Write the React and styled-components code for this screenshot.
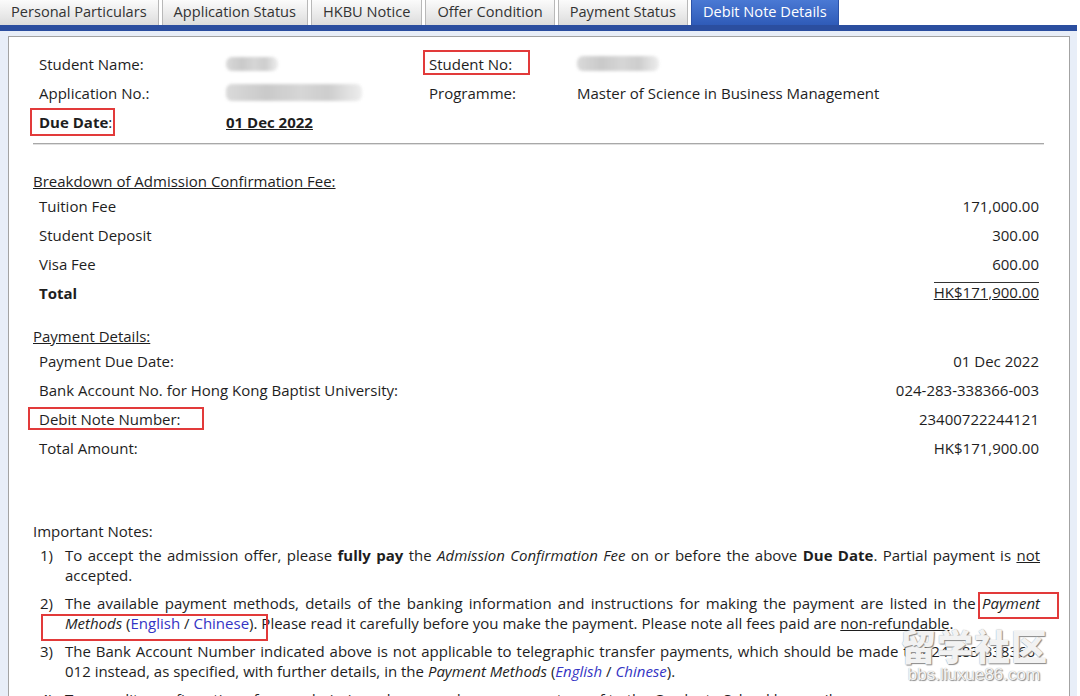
import React from "react";
import styled, { createGlobalStyle } from "styled-components";

const Global = createGlobalStyle`
  html, body { margin: 0; padding: 0; background: #fff; }
  body {
    font-family: "Open Sans", "Noto Sans", "Liberation Sans", sans-serif;
    font-size: 15px;
    color: #1e1e1e;
    overflow: hidden;
  }
`;

const Page = styled.div`
  position: relative;
  width: 1077px;
  height: 696px;
  overflow: hidden;
`;

const TabBar = styled.div`
  display: flex;
  align-items: flex-end;
  gap: 3px;
  height: 25px;
`;

const Tab = styled.div`
  height: 25px;
  box-sizing: border-box;
  padding: 0 11px 3px;
  display: flex;
  align-items: center;
  font-size: 14.6px;
  white-space: nowrap;
  border: 1px solid ${(p) => (p.$active ? "#2c52a8" : "#b8b8b8")};
  border-top: none;
  border-bottom: none;
  color: ${(p) => (p.$active ? "#fff" : "#333")};
  background: ${(p) =>
    p.$active
      ? "linear-gradient(#4a79d4, #2f5bb8)"
      : "linear-gradient(#fbfbfb, #e9e9e9 60%, #dcdcdc)"};
  margin-left: ${(p) => (p.$first ? "-1px" : "0")};
`;

const BlueBar = styled.div`
  height: 6px;
  background: #2b4e9f;
`;

const Frame = styled.div`
  background: #e8eef8;
  padding: 5px 7px 0 8px;
`;

const Panel = styled.div`
  background: #fff;
  border: 1px solid #a3a3a3;
  border-bottom: none;
  padding: 12px 25px 0 24px;
  height: 680px;
`;

const InfoGrid = styled.div`
  display: grid;
  grid-template-columns: 187px 203px 148px 1fr;
  grid-auto-rows: 29px;
  align-items: center;
  padding-left: 6px;
`;

const Cell = styled.div`
  white-space: nowrap;
  font-weight: ${(p) => (p.$bold ? 700 : 400)};
  text-decoration: ${(p) => (p.$under ? "underline" : "none")};
`;

const Blur = styled.div`
  width: ${(p) => p.$w}px;
  height: ${(p) => p.$h}px;
  border-radius: 6px;
  background: linear-gradient(90deg, #d6d6d6, #c4c4c4 30%, #d2d2d2 55%, #c8c8c8 75%, #ececec);
  filter: blur(1.5px);
  opacity: 0.9;
`;

const Mark = styled.span`
  position: relative;
  white-space: nowrap;
  &::after {
    content: "";
    position: absolute;
    top: ${(p) => -p.$t}px;
    bottom: ${(p) => -p.$b}px;
    left: ${(p) => -p.$l}px;
    right: ${(p) => -p.$r}px;
    border: 2px solid #e23a3a;
    pointer-events: none;
  }
`;

const Separator = styled.hr`
  margin: 7px 0 0 0;
  border: none;
  border-top: 1px solid #a8a8a8;
  border-bottom: 1px solid #e0e0e0;
  height: 0;
`;

const Heading = styled.div`
  line-height: 20px;
  text-decoration: ${(p) => (p.$plain ? "none" : "underline")};
  margin-top: ${(p) => p.$mt}px;
`;

const Rows = styled.div`
  display: flex;
  flex-direction: column;
  padding: 0 5px 0 6px;
`;

const Row = styled.div`
  height: 29px;
  display: flex;
  align-items: center;
  justify-content: space-between;
  font-weight: ${(p) => (p.$bold ? 700 : 400)};
`;

const TotalValue = styled.span`
  font-weight: 400;
  text-decoration: underline;
  border-top: 1px solid #333;
  line-height: 19px;
  margin-top: -2px;
`;

const Notes = styled.ol`
  list-style: none;
  margin: 5px 0 0 7px;
  padding: 0;
`;

const Note = styled.li`
  display: grid;
  grid-template-columns: 25px 1fr;
  line-height: 19.5px;
  margin-bottom: 9px;
  padding-right: 4px;
`;

const NoteText = styled.div`
  text-align: justify;
`;

const Link = styled.a`
  color: #3434c4;
  text-decoration: none;
`;

const Watermark = styled.div`
  position: absolute;
  left: 900px;
  top: 624px;
  display: flex;
  flex-direction: column;
  align-items: center;
  pointer-events: none;
  color: rgba(255, 255, 255, 0.88);
  text-shadow: 0 0 1px #999, 1px 1px 1px #888;
`;

const WmBig = styled.div`
  font-family: "Noto Sans CJK SC", sans-serif;
  font-weight: 900;
  font-size: 36px;
  letter-spacing: 1px;
  line-height: 42px;
`;

const WmSmall = styled.div`
  font-family: "Liberation Sans", sans-serif;
  font-size: 17px;
  line-height: 18px;
`;

const tabs = [
  "Personal Particulars",
  "Application Status",
  "HKBU Notice",
  "Offer Condition",
  "Payment Status",
  "Debit Note Details",
];

export default function App() {
  return (
    <Page>
      <Global />
      <TabBar>
        {tabs.map((t, i) => (
          <Tab key={t} $first={i === 0} $active={i === tabs.length - 1}>
            {t}
          </Tab>
        ))}
      </TabBar>
      <BlueBar />
      <Frame>
        <Panel>
          <InfoGrid>
            <Cell>Student Name:</Cell>
            <Blur $w={52} $h={14} />
            <Cell>
              <Mark $t={4} $b={1} $l={6} $r={18}>Student No:</Mark>
            </Cell>
            <Blur $w={82} $h={15} />
            <Cell>Application No.:</Cell>
            <Blur $w={136} $h={17} />
            <Cell>Programme:</Cell>
            <Cell>Master of Science in Business Management</Cell>
            <Cell>
              <Mark $t={4} $b={4} $l={9} $r={3}>
                <b>Due Date</b>:
              </Mark>
            </Cell>
            <Cell $bold $under>01 Dec 2022</Cell>
          </InfoGrid>
          <Separator />
          <Heading $mt={26}>Breakdown of Admission Confirmation Fee:</Heading>
          <Rows>
            <Row><span>Tuition Fee</span><span>171,000.00</span></Row>
            <Row><span>Student Deposit</span><span>300.00</span></Row>
            <Row><span>Visa Fee</span><span>600.00</span></Row>
            <Row $bold>
              <span>Total</span>
              <TotalValue>HK$171,900.00</TotalValue>
            </Row>
          </Rows>
          <Heading $mt={19}>Payment Details:</Heading>
          <Rows>
            <Row><span>Payment Due Date:</span><span>01 Dec 2022</span></Row>
            <Row><span>Bank Account No. for Hong Kong Baptist University:</span><span>024-283-338366-003</span></Row>
            <Row>
              <Mark $t={2} $b={1} $l={11} $r={23}>Debit Note Number:</Mark>
              <span>23400722244121</span>
            </Row>
            <Row><span>Total Amount:</span><span>HK$171,900.00</span></Row>
          </Rows>
          <Heading $plain $mt={59}>Important Notes:</Heading>
          <Notes>
            <Note>
              <span>1)</span>
              <NoteText>
                To accept the admission offer, please <b>fully pay</b> the{" "}
                <i>Admission Confirmation Fee</i> on or before the above{" "}
                <b>Due Date</b>. Partial payment is <u>not</u> accepted.
              </NoteText>
            </Note>
            <Note>
              <span>2)</span>
              <NoteText>
                The available payment methods, details of the banking information
                and instructions for making the payment are listed in the{" "}
                <Mark $t={1} $b={6} $l={4} $r={19}><i>Payment</i></Mark>{" "}
                <Mark $t={-1} $b={8} $l={24} $r={11}>
                  <i>Methods</i> (<Link href="#">English</Link> /{" "}
                  <Link href="#">Chinese</Link>).
                </Mark>{" "}
                Please read it carefully before you make the payment. Please note
                all fees paid are <u>non-refundable</u>.
              </NoteText>
            </Note>
            <Note>
              <span>3)</span>
              <NoteText>
                The Bank Account Number indicated above is not applicable to
                telegraphic transfer payments, which should be made to
                024-283-338366-012 instead, as specified, with further details, in
                the <i>Payment Methods</i> (
                <Link href="#"><i>English</i></Link> /{" "}
                <Link href="#"><i>Chinese</i></Link>).
              </NoteText>
            </Note>
            <Note>
              <span>4)</span>
              <NoteText>
                To expedite confirmation of your admission, please send your payment
                proof to the Graduate School by email.
              </NoteText>
            </Note>
          </Notes>
        </Panel>
      </Frame>
      <Watermark>
        <WmBig>留学社区</WmBig>
        <WmSmall>bbs.liuxue86.com</WmSmall>
      </Watermark>
    </Page>
  );
}
